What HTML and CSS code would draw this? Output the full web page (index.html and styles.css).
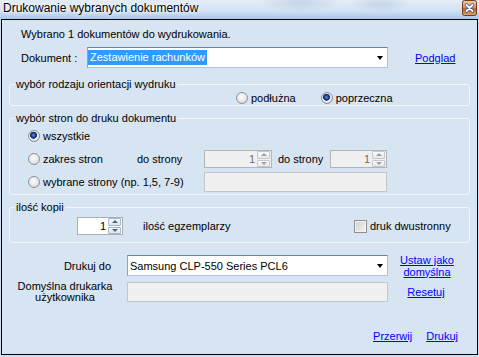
FILE: index.html
```html
<!DOCTYPE html>
<html lang="pl">
<head>
    <meta charset="UTF-8">
    <meta name="viewport" content="width=device-width, initial-scale=1.0">
    <title>Drukowanie wybranych dokumentów</title>

    <link rel="stylesheet" href="styles.css">
</head>
<body>
    <div class="titlebar">
        <span class="title">Drukowanie wybranych dokumentów</span>
        <span class="close">
            <svg width="15" height="16" viewBox="0 0 15 16">
                <defs>
                    <linearGradient id="cg" x1="0" y1="0" x2="0" y2="1">
                        <stop offset="0" stop-color="#f1cfa8"/>
                        <stop offset="0.45" stop-color="#d9975f"/>
                        <stop offset="0.55" stop-color="#b8642c"/>
                        <stop offset="1" stop-color="#e0a46a"/>
                    </linearGradient>
                </defs>
                <rect x="0.5" y="0.5" width="14" height="15" rx="2" fill="url(#cg)" stroke="#6e3d1a"/>
                <path d="M4.5 5 L10.5 11 M10.5 5 L4.5 11" stroke="#2f4f9a" stroke-width="3.2" stroke-linecap="round"/>
                <path d="M4.5 5 L10.5 11 M10.5 5 L4.5 11" stroke="#fff" stroke-width="1.8" stroke-linecap="round"/>
            </svg>
        </span>
    </div>

    <div class="window">
        <p class="info">Wybrano 1 dokumentów do wydrukowania.</p>

        <div class="doc-row">
            <span class="doc-label">Dokument :</span>
            <div class="combo combo-doc"><span class="sel">Zestawienie rachunków</span><span class="arrow"></span></div>
            <a class="link preview" href="#">Podglad</a>
        </div>

        <fieldset class="group group-orient">
            <legend>wybór rodzaju orientacji wydruku</legend>
            <div class="orient-row">
                <span class="opt"><span class="radio"></span>podłużna</span>
                <span class="opt opt-cross"><span class="radio checked"></span>poprzeczna</span>
            </div>
        </fieldset>

        <fieldset class="group group-pages">
            <legend>wybór stron do druku dokumentu</legend>
            <div class="pages-row row-all">
                <span class="opt"><span class="radio checked"></span>wszystkie</span>
            </div>
            <div class="pages-row row-range">
                <span class="opt opt-range"><span class="radio"></span>zakres stron</span>
                <span class="to-label">do strony</span>
                <div class="spin spin-from disabled">
                    <span class="spin-val">1</span>
                    <span class="spin-btns"><span class="up"></span><span class="down"></span></span>
                </div>
                <span class="to-label to-label2">do strony</span>
                <div class="spin spin-to disabled">
                    <span class="spin-val">1</span>
                    <span class="spin-btns"><span class="up"></span><span class="down"></span></span>
                </div>
            </div>
            <div class="pages-row row-list">
                <span class="opt opt-list"><span class="radio"></span>wybrane strony (np. 1,5, 7-9)</span>
                <div class="textbox pages-box disabled"></div>
            </div>
        </fieldset>

        <fieldset class="group group-copies">
            <legend>ilość kopii</legend>
            <div class="copies-row">
                <div class="spin spin-copies">
                    <span class="spin-val">1</span>
                    <span class="spin-btns"><span class="up"></span><span class="down"></span></span>
                </div>
                <span class="copies-label">ilość egzemplarzy</span>
                <span class="opt"><span class="check"></span>druk dwustronny</span>
            </div>
        </fieldset>

        <div class="printer-row">
            <span class="printer-label">Drukuj do</span>
            <div class="combo combo-printer"><span class="val">Samsung CLP-550 Series PCL6</span><span class="arrow"></span></div>
            <a class="link side-link" href="#">Ustaw jako<br>domyślna</a>
        </div>

        <div class="default-row">
            <span class="default-label">Domyślna drukarka<br>użytkownika</span>
            <div class="textbox default-box disabled"></div>
            <a class="link side-link reset" href="#">Resetuj</a>
        </div>

        <div class="actions">
            <a class="link" href="#">Przerwij</a>
            <a class="link" href="#">Drukuj</a>
        </div>
    </div>
</body>
</html>
```

FILE: styles.css
```css
body {
    margin: 0;
    width: 479px;
    height: 357px;
    overflow: hidden;
    font-family: "Liberation Sans", Arial, sans-serif;
    font-size: 11px;
    color: #000;
    background: #cddff2;
}

/* title bar */
.titlebar {
    height: 19px;
    display: flex;
    align-items: flex-start;
    background:
        radial-gradient(ellipse 40px 10px at 300px 2px, rgba(150, 170, 200, .35), transparent),
        radial-gradient(ellipse 30px 8px at 380px 4px, rgba(140, 165, 200, .3), transparent),
        linear-gradient(#e4edf7, #d3e2f3 55%, #a9c7ea);
}
.title {
    padding-left: 3px;
    font-size: 12px;
    line-height: 16px;
    color: #000;
    text-shadow: 0 0 5px #fff, 0 0 3px #fff;
}
.close {
    margin-left: auto;
    margin-right: 2px;
    width: 15px;
    height: 16px;
}
.close svg {
    display: block;
}

/* window body */
.window {
    margin: 0 1px;
    height: 336px;
    box-sizing: border-box;
    border: 1px solid #000;
    background: #d7e4f2;
    padding: 0 7px;
}
.info {
    margin: 8px 0 0 12px;
    line-height: 13px;
}

.link {
    color: #0000ff;
    text-decoration: underline;
    line-height: 12px;
}

/* combos and boxes */
.combo {
    box-sizing: border-box;
    height: 21px;
    display: flex;
    align-items: center;
    background: #fff;
    border: 1px solid #a9c3e0;
    border-top-color: #5f86b6;
    border-left-color: #86a6cb;
}
.combo .sel {
    background: #3399ff;
    color: #fff;
    padding: 0 2px;
    line-height: 15px;
}
.combo .val {
    padding-left: 2px;
}
.arrow {
    margin-left: auto;
    margin-right: 4px;
    width: 0;
    height: 0;
    border-left: 3.5px solid transparent;
    border-right: 3.5px solid transparent;
    border-top: 4px solid #000;
}
.textbox {
    box-sizing: border-box;
    height: 20px;
    background: #fff;
    border: 1px solid #abadb3;
}
.textbox.disabled {
    background: #f0f0f0;
    border-color: #c2c6ca;
}

.doc-row {
    display: flex;
    align-items: center;
    height: 21px;
    margin-top: 6px;
    padding-left: 12px;
}
.doc-label {
    width: 66px;
}
.combo-doc {
    width: 301px;
}
.preview {
    margin-left: 27px;
}

/* group boxes */
.group {
    margin: 0;
    padding: 0;
    min-width: 0;
    border: 1px solid #f3f7fb;
    border-radius: 3px;
}
.group legend {
    margin-left: 5px;
    padding: 0 1px;
    line-height: 13px;
}
.group-orient {
    margin-top: 10px;
}
.group-pages {
    margin-top: 6px;
    padding: 3px 0 2px;
}
.group-copies {
    margin-top: 6px;
    padding: 3px 0 7px;
}

.opt {
    display: inline-flex;
    align-items: center;
    gap: 3px;
    white-space: nowrap;
}
.radio {
    flex: none;
    box-sizing: border-box;
    width: 12px;
    height: 12px;
    border-radius: 50%;
    border: 1px solid #8d9296;
    background: radial-gradient(circle at 45% 40%, #fdfdfd, #e4e4e4 60%, #c9c9c9);
}
.radio.checked {
    background: radial-gradient(circle at 45% 42%, #5f8fe6 0, #1f4497 2px, #112b6c 3.2px, #e9ebee 3.8px, #f4f4f4 4.5px, #cdcdcd 6px);
}
.check {
    flex: none;
    box-sizing: border-box;
    width: 13px;
    height: 13px;
    border: 1px solid #8f8f8f;
    background: linear-gradient(135deg, #cfcfcf, #f6f6f6);
    box-shadow: inset 0 0 0 1px #f4f4f4;
}

.orient-row {
    display: flex;
    align-items: center;
    height: 14px;
    padding-left: 226px;
}
.opt-cross {
    margin-left: 25px;
}

.pages-row {
    display: flex;
    align-items: center;
    padding-left: 18px;
}
.row-all {
    height: 16px;
}
.row-range {
    height: 18px;
    margin-top: 6px;
}
.row-list {
    height: 20px;
    margin-top: 4px;
}
.opt-range {
    width: 109px;
}
.to-label {
    width: 67px;
}
.to-label2 {
    margin-left: 6px;
    width: 52px;
}
.opt-list {
    width: 176px;
}
.pages-box {
    width: 183px;
}

/* spinners */
.spin {
    box-sizing: border-box;
    height: 18px;
    display: flex;
    background: #fff;
    border: 1px solid #abadb3;
}
.spin.disabled {
    background: #f0f0f0;
    border-color: #b1b5b9;
    color: #6d6d6d;
}
.spin-val {
    flex: 1;
    text-align: right;
    line-height: 16px;
    padding-right: 2px;
}
.spin-btns {
    width: 13px;
    display: flex;
    flex-direction: column;
    gap: 1px;
    padding: 0 1px 0 0;
}
.spin-btns span {
    flex: 1;
    display: flex;
    align-items: center;
    justify-content: center;
    border: 1px solid #c3c8cc;
    border-radius: 1px;
    background: linear-gradient(#fbfbfb, #e6e8ea);
}
.spin-btns .up::after,
.spin-btns .down::after {
    content: "";
    border-left: 3px solid transparent;
    border-right: 3px solid transparent;
}
.spin-btns .up::after {
    border-bottom: 3px solid #9aa0a6;
}
.spin-btns .down::after {
    border-top: 3px solid #9aa0a6;
}
.spin:not(.disabled) .spin-btns span {
    border-color: #a7b7ca;
    background: linear-gradient(#f4f8fc, #dbe6f2);
}
.spin:not(.disabled) .up::after {
    border-bottom-color: #4a6487;
}
.spin:not(.disabled) .down::after {
    border-top-color: #4a6487;
}
.spin-from {
    width: 68px;
}
.spin-to {
    width: 57px;
}

.copies-row {
    display: flex;
    align-items: center;
    height: 18px;
    padding-left: 67px;
}
.spin-copies {
    width: 46px;
}
.copies-label {
    margin-left: 20px;
    width: 211px;
}

/* printer */
.printer-row,
.default-row {
    display: flex;
    align-items: center;
}
.printer-row {
    height: 21px;
    margin-top: 12px;
}
.printer-label {
    width: 118px;
    box-sizing: border-box;
    padding-right: 16px;
    text-align: right;
}
.combo-printer {
    width: 261px;
}
.side-link {
    width: 78px;
    text-align: center;
}
.default-row {
    height: 20px;
    margin-top: 6px;
}
.default-label {
    width: 112px;
    margin-right: 6px;
    text-align: center;
    line-height: 11px;
}
.default-box {
    width: 261px;
}
.reset {
    width: 76px;
}

.actions {
    display: flex;
    justify-content: flex-end;
    gap: 14px;
    margin-top: 28px;
    padding-right: 12px;
    line-height: 13px;
}
```
